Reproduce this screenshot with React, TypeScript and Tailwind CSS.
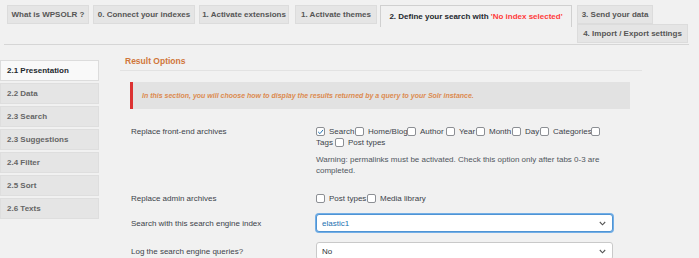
import React from "react";

function Box({ checked = false }: { checked?: boolean }) {
  return (
    <span className="inline-flex w-[9px] h-[9px] shrink-0 items-center justify-center rounded-[2px] border border-[#8c8f94] bg-white">
      {checked && (
        <svg width="8" height="8" viewBox="0 0 10 10">
          <path d="M2 5.2 L4.2 7.4 L8.3 2.4" fill="none" stroke="#2271b1" strokeWidth="1.4" strokeLinecap="round" strokeLinejoin="round" />
        </svg>
      )}
    </span>
  );
}

function Chevron() {
  return (
    <svg width="7" height="5" viewBox="0 0 7 5">
      <path d="M0.8 1 L3.5 3.8 L6.2 1" fill="none" stroke="#555" strokeWidth="1.1" />
    </svg>
  );
}

function Tab({ w, ml, children }: { w: string; ml: string; children: React.ReactNode }) {
  return (
    <div className={`${w} ${ml} h-[19px] shrink-0 flex items-center justify-center bg-[#e5e5e5] border border-[#dcdcdc] text-[#555] font-bold whitespace-nowrap`}>
      {children}
    </div>
  );
}

const side = ["2.1 Presentation", "2.2 Data", "2.3 Search", "2.3 Suggestions", "2.4 Filter", "2.5 Sort", "2.6 Texts"];

export default function App() {
  return (
    <div className="w-[699px] h-[258px] overflow-hidden bg-[#f1f1f1] font-['Liberation_Sans',Arial,sans-serif] text-[8px] leading-[11px] text-[#3c434a]">
      {/* Tabs */}
      <div className="ml-[4px] w-[685px] h-[45px] border-b border-[#d6d6d6] pt-[5px] flex items-start">
        <Tab w="w-[82px]" ml="ml-[3px]">What is WPSOLR ?</Tab>
        <Tab w="w-[102px]" ml="ml-[4px]">0. Connect your indexes</Tab>
        <Tab w="w-[90px]" ml="ml-[4px]">1. Activate extensions</Tab>
        <Tab w="w-[82px]" ml="ml-[6px]">1. Activate themes</Tab>
        <div className="ml-[3px] w-[192px] h-[22px] shrink-0 flex items-center justify-center border border-b-0 border-[#d0d0d0] bg-[#f1f1f1] text-[#23282d] font-bold whitespace-nowrap">
          <span>2. Define your search with <span className="text-[#ff3b3b]">'No index selected'</span></span>
        </div>
        <div className="ml-[5px] flex flex-col">
          <Tab w="w-[76px]" ml="ml-0">3. Send your data</Tab>
          <Tab w="w-[111px]" ml="ml-0">4. Import / Export settings</Tab>
        </div>
      </div>

      <div className="flex items-start">
        {/* Sidebar */}
        <div className="mt-[15px] w-[99px] flex flex-col gap-[2px]">
          {side.map((s, i) => (
            <div
              key={s}
              className={
                i === 0
                  ? "h-[21px] pl-[6px] flex items-center bg-[#f9f9f9] border border-[#dcdcdc] text-[#23282d] font-bold"
                  : "h-[21px] pl-[6px] flex items-center bg-[#e5e5e5] border border-[#dedede] text-[#666] font-bold"
              }
            >
              {s}
            </div>
          ))}
        </div>

        {/* Main */}
        <div className="ml-[21px] w-[522px]">
          <div className="h-[26px] pt-[8px] pl-[5px] border-b border-[#e2e2e2]">
            <span className="text-[#d0763a] font-bold text-[8.5px] leading-[16px]">Result Options</span>
          </div>

          <div className="ml-[10px] mt-[11px] w-[500px] h-[27px] flex items-center border-l-[3px] border-[#dc3232] bg-[#e2e2e2] pl-[9px]">
            <span className="italic font-bold text-[#dc8a4f] text-[7px]">
              In this section, you will choose how to display the results returned by a query to your Solr instance.
            </span>
          </div>

          <div className="ml-[11px] mt-[17px] grid grid-cols-[185px_297px]">
            {/* row 1 */}
            <div className="text-[#3c434a]">Replace front-end archives</div>
            <div>
              <div className="flex items-center h-[11px]">
                <Box checked />
                <span className="ml-[4px] w-[26px] whitespace-nowrap">Search</span>
                <Box />
                <span className="ml-[4px] w-[39px] whitespace-nowrap">Home/Blog</span>
                <Box />
                <span className="ml-[4px] w-[26px] whitespace-nowrap">Author</span>
                <Box />
                <span className="ml-[4px] w-[17px] whitespace-nowrap">Year</span>
                <Box />
                <span className="ml-[4px] w-[23px] whitespace-nowrap">Month</span>
                <Box />
                <span className="ml-[4px] w-[15px] whitespace-nowrap">Day</span>
                <Box />
                <span className="ml-[4px] w-[38px] whitespace-nowrap">Categories</span>
                <Box />
              </div>
              <div className="flex items-center h-[11px]">
                <span className="w-[19px] whitespace-nowrap">Tags</span>
                <Box />
                <span className="ml-[4px] whitespace-nowrap">Post types</span>
              </div>
              <div className="mt-[6px] text-[#50575e]">
                Warning: permalinks must be activated. Check this option only after tabs 0-3 are
                <br />
                completed.
              </div>
            </div>

            {/* row 2 */}
            <div className="mt-[17px]">Replace admin archives</div>
            <div className="mt-[17px] flex items-center h-[11px]">
              <Box />
              <span className="ml-[4px] w-[38px] whitespace-nowrap">Post types</span>
              <Box />
              <span className="ml-[4px] whitespace-nowrap">Media library</span>
            </div>

            {/* row 3 */}
            <div className="mt-[10px] h-[18px] flex items-center">Search with this search engine index</div>
            <div className="mt-[10px] h-[18px] flex items-center justify-between rounded-[3px] border border-[#4f94d4] shadow-[0_0_0_1px_#72aee6] bg-white pl-[5px] pr-[6px]">
              <span className="text-[#2271b1]">elastic1</span>
              <Chevron />
            </div>

            {/* row 4 */}
            <div className="mt-[10px] h-[18px] flex items-center">Log the search engine queries?</div>
            <div className="mt-[10px] h-[18px] flex items-center justify-between rounded-[3px] border border-[#c9c9c9] bg-white pl-[5px] pr-[6px]">
              <span className="text-[#2c3338]">No</span>
              <Chevron />
            </div>
          </div>
        </div>
      </div>
    </div>
  );
}
